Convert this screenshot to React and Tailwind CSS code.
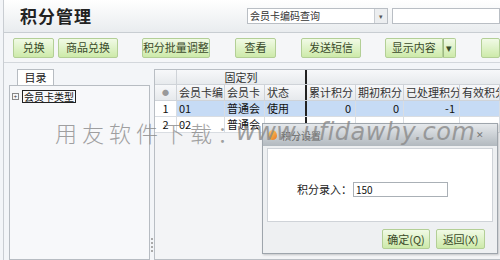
import React from 'react';

const font = { fontFamily: '"Noto Sans CJK SC", "Noto Sans", sans-serif' };

const GreenButton = ({ children, className = '' }) => (
  <div
    className={`h-[20px] flex items-center justify-center border border-[#b3cf96] rounded-[2px] bg-gradient-to-b from-[#f1fae6] to-[#cdeaa9] text-[11px] text-[#3a4a2a] ${className}`}
  >
    {children}
  </div>
);

const cols = [
  { w: 'w-[22px]', label: '*' },
  { w: 'w-[48px]', label: '会员卡编' },
  { w: 'w-[40px]', label: '会员卡' },
  { w: 'w-[42px]', label: '状态' },
  { w: 'w-[49px]', label: '累计积分' },
  { w: 'w-[48px]', label: '期初积分' },
  { w: 'w-[56px]', label: '已处理积分' },
  { w: 'w-[40px]', label: '有效积分' },
];

const rows = [
  ['1', '01', '普通会', '使用', '0', '0', '-1', ''],
  ['2', '02', '普通会', '', '', '', '', ''],
];

export default function App() {
  return (
    <div className="relative w-[500px] h-[260px] overflow-hidden bg-[#f3f5f8] text-[#222]" style={font}>
      <div className="ml-[3px] h-full border-l border-[#c9cdd2] flex flex-col">
        {/* title bar */}
        <div className="h-[33px] flex items-center bg-gradient-to-b from-white to-[#e9ecef] border-b border-[#c8cdd2]">
          <div className="ml-[16px] text-[17px] font-bold tracking-[1px] text-[#222] w-[227px]">积分管理</div>
          <div className="flex items-center h-[16px] w-[141px] border border-[#b9bec4] bg-white">
            <div className="flex-1 text-[10px] pl-[2px] text-[#333] leading-none">会员卡编码查询</div>
            <div className="w-[13px] h-full border-l border-[#c9cdd2] bg-[#eceef0] flex items-center justify-center text-[7px] text-[#555]">▾</div>
          </div>
          <div className="ml-[4px] h-[16px] flex-1 border border-[#b9bec4] bg-white"></div>
        </div>

        {/* toolbar */}
        <div className="h-[30px] flex items-center border-b border-[#d3d7dc] bg-[#f5f6f8]">
          <GreenButton className="ml-[9px] w-[43px]">兑换</GreenButton>
          <GreenButton className="ml-[4px] w-[62px]">商品兑换</GreenButton>
          <GreenButton className="ml-[24px] w-[71px]">积分批量调整</GreenButton>
          <GreenButton className="ml-[25px] w-[43px]">查看</GreenButton>
          <GreenButton className="ml-[25px] w-[62px]">发送短信</GreenButton>
          <div className="ml-[24px] flex">
            <GreenButton className="w-[58px] rounded-r-none">显示内容</GreenButton>
            <GreenButton className="w-[13px] border-l-[#9fb985] rounded-l-none text-[7px]">▾</GreenButton>
          </div>
          <GreenButton className="ml-[25px] w-[20px]"></GreenButton>
        </div>

        {/* body */}
        <div className="flex-1 flex pt-[6px]">
          {/* left tree panel */}
          <div className="ml-[5px] w-[144px] flex flex-col">
            <div className="ml-[8px] w-[37px] h-[16px] border border-b-0 border-[#b7bcc2] bg-white flex items-center justify-center text-[11px] text-[#222]">目录</div>
            <div className="flex-1 border border-[#b7bcc2] bg-[#f7f8fa] pt-[4px] pl-[2px]">
              <div className="flex items-center">
                <div className="w-[7px] h-[7px] border border-[#888] text-[6px] leading-none flex items-center justify-center text-[#333]">+</div>
                <div className="ml-[3px] border border-[#222] text-[10px] leading-[11px] px-[1px] text-[#111]">会员卡类型</div>
              </div>
            </div>
          </div>

          {/* splitter */}
          <div className="w-[4px] flex flex-col justify-end items-center pb-[8px] gap-[2px]">
            <div className="w-[2px] h-[2px] bg-[#aaa]"></div>
            <div className="w-[2px] h-[2px] bg-[#aaa]"></div>
            <div className="w-[2px] h-[2px] bg-[#aaa]"></div>
            <div className="w-[2px] h-[2px] bg-[#aaa]"></div>
          </div>

          {/* grid */}
          <div className="flex-1 flex flex-col border border-r-0 border-[#b9bec4] bg-[#f3f4f6] text-[11px]">
            <div className="flex h-[15px] bg-gradient-to-b from-[#f7f8fa] to-[#e7eaed] border-b border-[#cfd3d8]">
              <div className="w-[22px] border-r border-[#cfd3d8]"></div>
              <div className="w-[130px] border-r-2 border-[#222] flex items-center justify-center text-[#333]">固定列</div>
              <div className="flex-1"></div>
            </div>
            <div className="flex h-[16px] bg-gradient-to-b from-[#f7f8fa] to-[#e6e9ec] border-b border-[#cfd3d8]">
              {cols.map((c, i) => (
                <div
                  key={i}
                  className={`${c.w} shrink-0 overflow-hidden whitespace-nowrap px-[2px] flex items-center ${i === 0 ? 'justify-center text-[7px] text-[#999]' : 'text-[#333]'} ${i === 3 ? 'border-r-2 border-[#222]' : 'border-r border-[#cfd3d8]'}`}
                >
                  {i === 0 ? '●' : c.label}
                </div>
              ))}
            </div>
            {rows.map((r, ri) => (
              <div key={ri} className={`flex h-[16px] border-b border-[#d9dde2] ${ri === 0 ? 'bg-[#c6dbf5]' : 'bg-white'}`}>
                {r.map((v, i) => (
                  <div
                    key={i}
                    className={`${cols[i].w} shrink-0 overflow-hidden whitespace-nowrap px-[2px] flex items-center text-[#111] ${i === 0 ? `justify-center ${ri === 0 ? 'bg-white' : ''}` : ''} ${i >= 4 ? 'justify-end pr-[4px]' : ''} ${i === 3 ? 'border-r-2 border-[#222]' : 'border-r border-[#d9dde2]'}`}
                  >
                    {v}
                  </div>
                ))}
              </div>
            ))}
            <div className="flex-1"></div>
          </div>
        </div>
      </div>

      {/* dialog */}
      <div className="absolute left-[262px] top-[123px] w-[236px] h-[131px] border border-[#9ea5ac] bg-[#eef0f2] flex flex-col shadow-[1px_1px_2px_rgba(0,0,0,0.2)]">
        <div className="h-[22px] flex items-center bg-gradient-to-b from-[#e6e9ec] to-[#b2b9bf] px-[5px]">
          <div className="w-[9px] h-[10px] rounded-[50%_50%_50%_50%/60%_60%_40%_40%] bg-gradient-to-br from-[#ffd56a] to-[#e7761f]"></div>
          <div className="ml-[4px] text-[10px] text-[#666]">积分设置</div>
          <div className="ml-auto mr-[8px] text-[9px] text-[#777]">✕</div>
        </div>
        <div className="mx-[4px] mt-[2px] h-[74px] border border-[#cfd3d8] bg-white flex items-center pl-[29px] pt-[8px]">
          <span className="text-[11px] text-[#222]">积分录入：</span>
          <div className="ml-[1px] w-[95px] h-[15px] border border-[#aab0b6] bg-white text-[10px] leading-[13px] pl-[2px] text-[#111]">150</div>
        </div>
        <div className="flex justify-end gap-[6px] mt-[7px] mr-[12px]">
          <GreenButton className="w-[48px] h-[19px] text-[10px]">确定(Q)</GreenButton>
          <GreenButton className="w-[49px] h-[19px] text-[10px]">返回(X)</GreenButton>
        </div>
      </div>

      {/* watermark */}
      <div
        className="absolute left-[55px] top-[114px] flex items-center text-[#8a8a8a] opacity-80 pointer-events-none whitespace-nowrap"
        style={{ fontFamily: '"Noto Sans CJK SC", sans-serif', fontWeight: 200 }}
      >
        <span className="text-[22px] tracking-[5px]">用友软件下载：</span>
        <span className="ml-[-8px] text-[24px] tracking-[0.5px] italic" style={{ fontFamily: '"DejaVu Sans", sans-serif', fontWeight: 300 }}>www.ufidawhy.com</span>
      </div>
    </div>
  );
}
